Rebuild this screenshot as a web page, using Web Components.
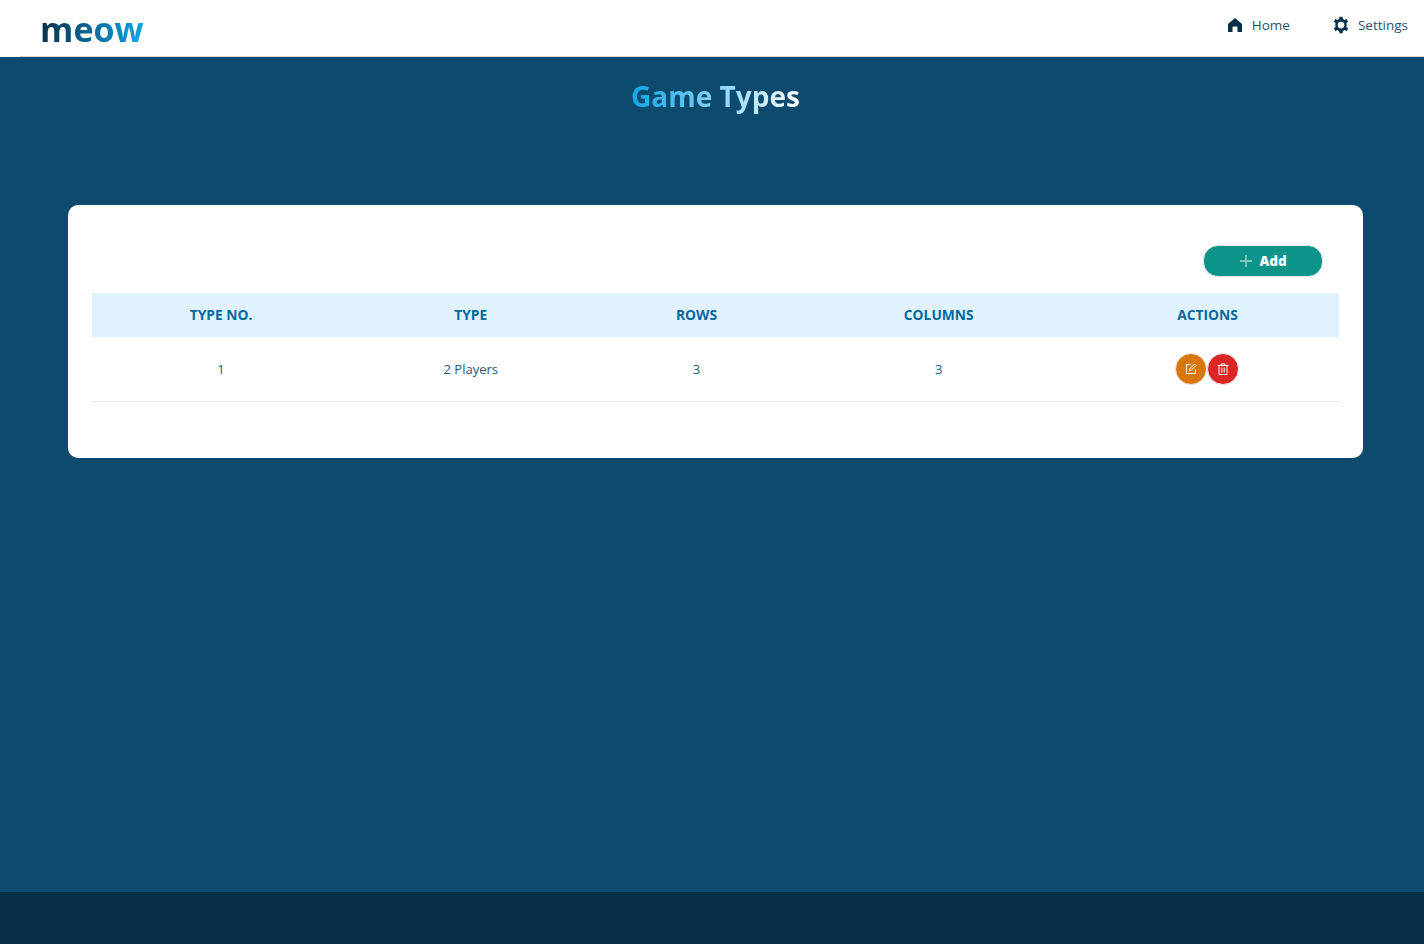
<!DOCTYPE html>
<html lang="en">
<head>
<meta charset="utf-8">
<title>Game Types</title>
<style>
html,body{margin:0;padding:0;height:100%}
body{font-family:"Open Sans","Noto Sans","Liberation Sans",sans-serif;background:#0c4a6e}
</style>
</head>
<body>
<app-shell>
  <app-header slot="header"></app-header>
  <page-title first="Game" second="Types"></page-title>
  <data-card>
    <add-button slot="tools">Add</add-button>
    <types-table></types-table>
  </data-card>
</app-shell>
<script>
const FONT='"Open Sans","Noto Sans","Liberation Sans",sans-serif';
function def(name,html,setup){
  customElements.define(name,class extends HTMLElement{
    constructor(){super();this.attachShadow({mode:'open'});this.shadowRoot.innerHTML=html;}
    connectedCallback(){if(setup)setup.call(this,this.shadowRoot);}
  });
}
def('app-shell',`<style>
:host{display:flex;flex-direction:column;height:944px;background:#0c4a6e;font-family:${FONT}}
main{flex:1;display:flex;flex-direction:column;min-height:0}
footer{height:52px;background:#082f49;flex:none}
</style><slot name="header"></slot><main><slot></slot></main><footer></footer>`);
def('app-header',`<style>
:host{display:flex;flex:none;height:57px;box-sizing:border-box;background:#fff;justify-content:space-between;padding:0 16px 0 40px;position:relative}
:host::after{content:"";position:absolute;left:20px;right:0;bottom:0;height:1px;background:#d4d4d4}
.logo{font-size:34px;font-weight:700;line-height:46px;margin-top:6px;background:linear-gradient(90deg,#082f49,#0ea5e9);-webkit-background-clip:text;background-clip:text;color:transparent;height:46px}
nav{display:flex;gap:42px;margin-top:15px;height:20px}
a{display:flex;align-items:center;gap:9px;font-size:13.5px;line-height:20px;color:#2a5370}
a.s{gap:8px}
svg{display:block;fill:#082f49}
</style>
<div class="logo">meow</div>
<nav>
<a><svg width="16" height="16" viewBox="0 0 16 16"><path d="M8 1 1.500 6.500a1 1 0 0 0-.5 1V15h4.500v-4.500a1 1 0 0 1 1-1h3a1 1 0 0 1 1 1V15H15V7.500a1 1 0 0 0-.5-1z"/></svg>Home</a>
<a class="s"><svg width="18" height="18" viewBox="0 0 24 24"><path fill-rule="evenodd" d="M14 1h-4l-.6 3a8.500 8.500 0 0 0-2.100 1.200L4.500 4.100 2.500 7.500l2.300 1.900a8.500 8.500 0 0 0 0 5.200l-2.300 1.900 2 3.400 2.800-1.100a8.500 8.500 0 0 0 2.100 1.200L10 23h4l.6-3a8.500 8.500 0 0 0 2.100-1.200l2.800 1.100 2-3.400-2.300-1.900a8.500 8.500 0 0 0 0-5.200l2.300-1.900-2-3.400-2.800 1.100A8.500 8.500 0 0 0 14.600 4zM12 7.500a4.500 4.500 0 1 1 0 9 4.500 4.500 0 0 1 0-9z"/></svg>Settings</a>
</nav>`);
def('page-title',`<style>
:host{display:block;flex:none;height:148px;text-align:center;padding:19px 0 0 7px;box-sizing:border-box}
h1{margin:0;font-size:28px;line-height:40px;font-weight:700;display:inline-block;background:linear-gradient(90deg,#0ea5e9,#fff);-webkit-background-clip:text;background-clip:text;color:transparent}
</style><h1 id="t"></h1>`,function(r){r.getElementById('t').textContent=this.getAttribute('first')+' '+this.getAttribute('second');});
def('data-card',`<style>
:host{display:block;flex:none;margin:0 61px 0 68px;height:253px;box-sizing:border-box;background:#fff;border-radius:10px;padding:41px 24px 0}
.tools{display:flex;justify-content:flex-end;padding-right:17px;height:47px}
</style><div class="tools"><slot name="tools"></slot></div><slot></slot>`);
def('add-button',`<style>
:host{display:inline-flex;align-items:center;justify-content:center;gap:6px;width:118px;height:30px;border-radius:15px;background:#0d9488;color:#fff;font-size:13.5px;font-weight:800;line-height:18px;border:1px solid #e5e7eb;margin:-1px;box-sizing:content-box}
span{display:block;margin-top:-1px}
svg{display:block;stroke:#9fd8d0;stroke-width:1.400;fill:none}
</style><svg width="14" height="14" viewBox="0 0 14 14"><path d="M7 1v12M1 7h12"/></svg><span><slot></slot></span>`);
def('round-action',`<style>
:host{display:flex;align-items:center;justify-content:center;width:30px;height:30px;border-radius:50%;border:1px solid #e5e7eb;margin:-1px 0;background:var(--bg)}
</style><slot></slot>`);
const cols='258px 241.5px 210px 274.5px 263px';
def('types-table',`<style>
:host{display:block;font-size:14px;color:#245d80}
.head,.row{display:grid;grid-template-columns:${cols};align-items:center;text-align:center}
.head{height:44px;box-sizing:border-box;padding-bottom:2px;background:#e0f2fe;color:#0369a1;font-weight:700;font-size:13.800px}
.row{height:65px;border-bottom:1px solid #e5e7eb;box-sizing:border-box;font-size:13px}
.acts{display:flex;justify-content:center;margin-left:-1px}
</style>
<div class="head"><div>TYPE NO.</div><div>TYPE</div><div>ROWS</div><div>COLUMNS</div><div>ACTIONS</div></div>
<div class="row"><div>1</div><div>2 Players</div><div>3</div><div>3</div>
<div class="acts">
<round-action style="--bg:#d97706"><svg width="12" height="12" viewBox="0 0 12 12" fill="none" stroke="#fff" stroke-width="1" style="display:block"><path d="M6 1.500H1.500v9h9V6"/><path d="M4.500 7.500V6L9.500 1l1.500 1.500-5 5z"/></svg></round-action>
<round-action style="--bg:#dc2626"><svg width="12" height="12" viewBox="0 0 12 12" fill="none" stroke="#fff" stroke-width="1" style="display:block"><path d="M.5 2.500h11M4 2.500V1h4v1.500M2 2.500v9h8v-9M4.800 4.500v5M7.200 4.500v5"/></svg></round-action>
</div></div>`);
</script>
</body>
</html>
